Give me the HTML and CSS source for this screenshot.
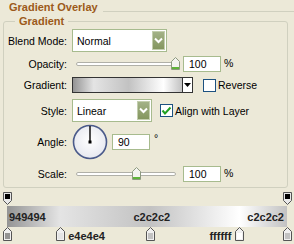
FILE: index.html
```html
<!DOCTYPE html>
<html lang="en">
  <head>
    <meta charset="UTF-8" />
    <title>Gradient Overlay</title>
    <link rel="stylesheet" href="styles.css">
  </head>
  <body>
    <div class="title">Gradient Overlay</div>

    <fieldset class="group">
      <legend>Gradient</legend>

      <div class="row row-blend">
        <span class="lbl">Blend Mode:</span>
        <div class="select select-blend">
          <span>Normal</span>
          <span class="btn"><svg width="9" height="7" viewBox="0 0 9 7"><path d="M1 1.5 L4.5 5 L8 1.5" fill="none" stroke="#fff" stroke-width="2"/></svg></span>
        </div>
      </div>

      <div class="row row-opacity">
        <span class="lbl">Opacity:</span>
        <div class="slider">
          <div class="track">
            <svg class="thumb" style="left: 100%" width="9" height="13" viewBox="0 0 9 13"><path d="M4.5 0.5 L8.5 4.5 V12.5 H0.5 V4.5 Z" fill="#f4f4f0" stroke="#8d9a80"/><rect x="1" y="10" width="7" height="2" fill="#5fb43a"/></svg>
          </div>
        </div>
        <div class="num">100</div>
        <span class="unit">%</span>
      </div>

      <div class="row row-gradient">
        <span class="lbl">Gradient:</span>
        <div class="swatch">
          <div class="swatch-fill"></div>
          <div class="swatch-arrow"><svg width="7" height="4" viewBox="0 0 7 4"><path d="M0 0 H7 L3.5 4 Z" fill="#000"/></svg></div>
        </div>
        <label class="check check-reverse"><span class="box"></span>Reverse</label>
      </div>

      <div class="row row-style">
        <span class="lbl">Style:</span>
        <div class="select select-style">
          <span>Linear</span>
          <span class="btn"><svg width="9" height="7" viewBox="0 0 9 7"><path d="M1 1.5 L4.5 5 L8 1.5" fill="none" stroke="#fff" stroke-width="2"/></svg></span>
        </div>
        <label class="check check-align"><span class="box"><svg width="11" height="10" viewBox="0 0 11 10"><path d="M1.5 4.5 L4 7.5 L9.5 1.5" fill="none" stroke="#21a121" stroke-width="2"/></svg></span>Align with Layer</label>
      </div>

      <div class="row row-angle">
        <span class="lbl">Angle:</span>
        <div class="dial">
          <svg width="36" height="36" viewBox="0 0 36 36">
            <defs>
              <radialGradient id="dialfill" cx="50%" cy="45%" r="60%">
                <stop offset="0" stop-color="#ffffff"/>
                <stop offset="1" stop-color="#e4e6ee"/>
              </radialGradient>
            </defs>
            <circle cx="18" cy="18" r="16.5" fill="url(#dialfill)" stroke="#4a5a8a" stroke-width="1.6"/>
            <line x1="18" y1="18" x2="18" y2="2" stroke="#000" stroke-width="1.4"/>
            <rect x="16.5" y="16.5" width="3" height="3" fill="#000"/>
          </svg>
        </div>
        <div class="num num-angle">90</div>
        <span class="deg">°</span>
      </div>

      <div class="row row-scale">
        <span class="lbl">Scale:</span>
        <div class="slider">
          <div class="track">
            <svg class="thumb" style="left: 61%" width="9" height="13" viewBox="0 0 9 13"><path d="M4.5 0.5 L8.5 4.5 V12.5 H0.5 V4.5 Z" fill="#f4f4f0" stroke="#8d9a80"/><rect x="1" y="10" width="7" height="2" fill="#5fb43a"/></svg>
          </div>
        </div>
        <div class="num">100</div>
        <span class="unit">%</span>
      </div>
    </fieldset>

    <div class="editor">
      <div class="stops stops-top">
        <svg class="stop" style="left: 0%" width="9" height="13" viewBox="0 0 9 13"><path d="M0.5 0.5 H8.5 V8.5 L4.5 12.5 L0.5 8.5 Z" fill="#e8e8e8" stroke="#555"/><rect x="2" y="2" width="5" height="5" fill="#000"/></svg>
        <svg class="stop" style="left: 100%" width="9" height="13" viewBox="0 0 9 13"><path d="M0.5 0.5 H8.5 V8.5 L4.5 12.5 L0.5 8.5 Z" fill="#e8e8e8" stroke="#555"/><rect x="2" y="2" width="5" height="5" fill="#000"/></svg>
      </div>

      <div class="bar">
        <span class="hex" style="left: 0%">949494</span>
        <span class="hex hex-mid" style="left: 51%">c2c2c2</span>
        <span class="hex hex-end" style="left: 100%">c2c2c2</span>
      </div>

      <div class="stops stops-bottom">
        <svg class="stop" style="left: 0%" width="9" height="14" viewBox="0 0 9 14"><path d="M4.5 0.5 L8.5 4.5 V13.5 H0.5 V4.5 Z" fill="#f0f0f0" stroke="#555"/><rect x="2" y="6" width="5" height="6" fill="#949494"/></svg>
        <svg class="stop" style="left: 19%" width="9" height="14" viewBox="0 0 9 14"><path d="M4.5 0.5 L8.5 4.5 V13.5 H0.5 V4.5 Z" fill="#f0f0f0" stroke="#555"/><rect x="2" y="6" width="5" height="6" fill="#e4e4e4"/></svg>
        <span class="stop-label" style="left: 19%">e4e4e4</span>
        <svg class="stop" style="left: 51%" width="9" height="14" viewBox="0 0 9 14"><path d="M4.5 0.5 L8.5 4.5 V13.5 H0.5 V4.5 Z" fill="#f0f0f0" stroke="#555"/><rect x="2" y="6" width="5" height="6" fill="#c2c2c2"/></svg>
        <span class="stop-label stop-label-left" style="left: 83%">ffffff</span>
        <svg class="stop" style="left: 83%" width="9" height="14" viewBox="0 0 9 14"><path d="M4.5 0.5 L8.5 4.5 V13.5 H0.5 V4.5 Z" fill="#f0f0f0" stroke="#555"/><rect x="2" y="6" width="5" height="6" fill="#ffffff"/></svg>
        <svg class="stop" style="left: 100%" width="9" height="14" viewBox="0 0 9 14"><path d="M4.5 0.5 L8.5 4.5 V13.5 H0.5 V4.5 Z" fill="#f0f0f0" stroke="#555"/><rect x="2" y="6" width="5" height="6" fill="#c2c2c2"/></svg>
      </div>
    </div>
  </body>
</html>
```

FILE: styles.css
```css
* {
  margin: 0;
  padding: 0;
  box-sizing: border-box;
}

body {
  width: 294px;
  height: 244px;
  overflow: hidden;
  background-color: #ece9d8;
  font-family: "Liberation Sans", Arial, sans-serif;
  font-size: 10.5px;
  color: #000;
}

.title {
  display: flex;
  height: 14px;
  padding-left: 9px;
  color: #9c5a1a;
  font-size: 11px;
  font-weight: bold;
  line-height: 14px;
}

.title::after {
  content: "";
  flex: 1;
  height: 0;
  margin: 11px 0 0 5px;
  border-top: 1px solid #d0d0bf;
}

.group {
  margin: 1px 6px 0 3px;
  border: 1px solid #d0d0bf;
  border-radius: 3px;
  padding: 0 0 5px 0;
}

.group legend {
  margin-left: 11px;
  padding: 0 4px;
  color: #9c5a1a;
  font-size: 11px;
  font-weight: bold;
  line-height: 13px;
}

.row {
  display: flex;
  align-items: center;
}

.lbl {
  width: 63px;
  margin-right: 5px;
  text-align: right;
}

/* dropdowns */
.select {
  display: flex;
  align-items: center;
  justify-content: space-between;
  height: 23px;
  padding: 0 1px 0 4px;
  border: 1px solid #a7bb8e;
  background-color: #fff;
}

.select .btn {
  display: flex;
  align-items: center;
  justify-content: center;
  width: 13px;
  height: 19px;
  border: 1px solid #c3ceae;
  background: linear-gradient(#a3b287, #84965f);
}

.row-blend {
  margin-top: 1px;
}

.select-blend {
  width: 95px;
}

.row-style {
  margin-top: 6px;
}

.select-style {
  width: 80px;
}

/* sliders and number fields */
.row-opacity {
  margin-top: 4px;
}

.row-scale {
  margin-top: 6px;
}

.slider {
  width: 108px;
  height: 16px;
  padding: 6px 4px 0 4px;
}

.slider .track {
  position: relative;
  height: 4px;
  border: 1px solid #b0b0a8;
  border-radius: 2px;
  background-color: #fff;
}

.slider .thumb {
  position: absolute;
  top: -6px;
  margin-left: -4.5px;
}

.num {
  width: 38px;
  height: 16px;
  margin-left: 3px;
  padding-left: 5px;
  border: 1px solid #a7bb8e;
  background-color: #fff;
  line-height: 14px;
}

.unit {
  margin-left: 3px;
  margin-top: -3px;
}

/* gradient picker */
.row-gradient {
  margin-top: 5px;
}

.swatch {
  display: flex;
  width: 121px;
  height: 16px;
  border: 1px solid #333;
}

.swatch-fill {
  flex: 1;
  background: linear-gradient(to right, #949494 0%, #e4e4e4 19%, #c2c2c2 51%, #ffffff 83%, #c2c2c2 100%);
}

.swatch-arrow {
  display: flex;
  align-items: center;
  justify-content: center;
  width: 10px;
  border-left: 1px solid #333;
  background-color: #fff;
}

.check {
  display: flex;
  align-items: center;
}

.check .box {
  display: flex;
  align-items: center;
  justify-content: center;
  width: 13px;
  height: 13px;
  margin-right: 2px;
  border: 1px solid #1c5180;
  background-color: #fff;
}

.check-reverse {
  margin-left: 10px;
}

.check-align {
  margin-left: 8px;
}

/* angle */
.row-angle {
  margin-top: 2px;
}

.dial {
  display: flex;
  width: 36px;
  height: 36px;
}

.num-angle {
  margin-left: 4px;
}

.deg {
  margin-left: 4px;
  margin-top: -8px;
}

/* gradient editor */
.editor {
  margin: 4px 7px 0 7px;
}

.stops {
  position: relative;
}

.stops-top {
  height: 14px;
}

.stops-bottom {
  height: 17px;
}

.stop {
  position: absolute;
  top: 0;
  margin-left: -4px;
}

.bar {
  position: relative;
  height: 21px;
  background: linear-gradient(to right, #949494 0%, #e4e4e4 19%, #c2c2c2 51%, #ffffff 83%, #c2c2c2 100%);
}

.hex {
  position: absolute;
  top: 5px;
  margin-left: 2px;
  color: #222;
  font-size: 11px;
  font-weight: bold;
}

.hex-mid {
  transform: translateX(-50%);
}

.hex-end {
  transform: translateX(-100%);
  margin-left: -3px;
}

.stop-label {
  position: absolute;
  top: 3px;
  margin-left: 8px;
  color: #222;
  font-size: 11px;
  font-weight: bold;
}

.stop-label-left {
  transform: translateX(-100%);
  margin-left: -8px;
}
```
